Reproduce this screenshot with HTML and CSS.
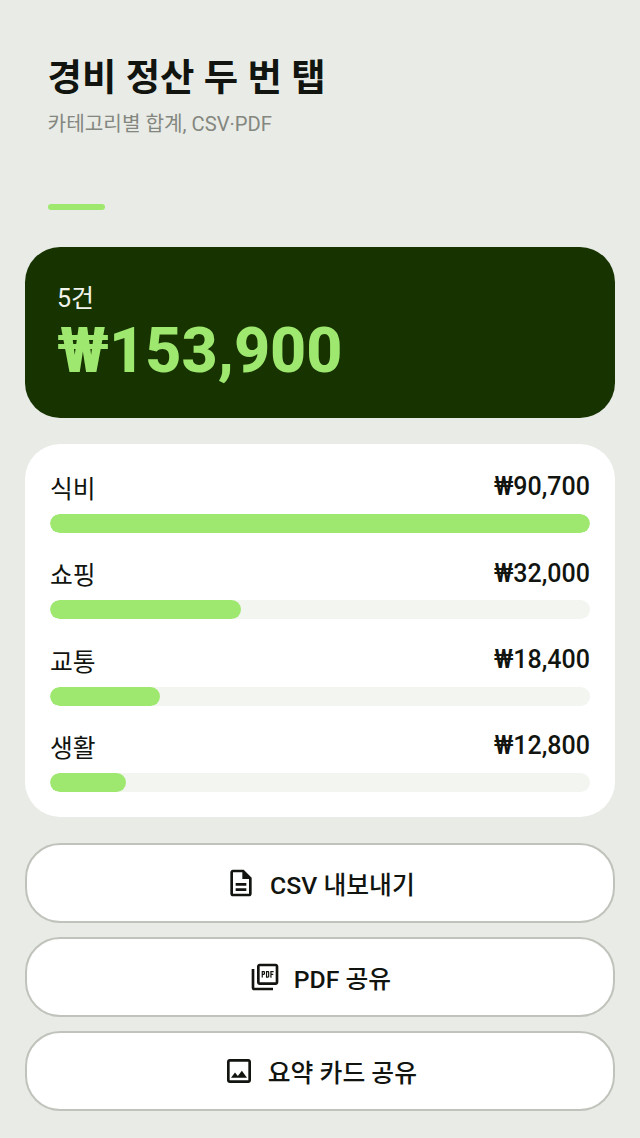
FILE: index.html
```html
<!DOCTYPE html>
<html lang="ko">
<head>
<meta charset="utf-8">
<title>경비 정산 두 번 탭</title>
<link rel="stylesheet" href="styles.css">
</head>
<body>
<main class="screen">
  <header class="head">
    <h1 class="title">경비 정산 두 번 탭</h1>
    <p class="subtitle">카테고리별 합계, CSV·PDF</p>
    <div class="accent"></div>
  </header>
  <section class="total">
    <div class="count">5건</div>
    <div class="sum">₩153,900</div>
  </section>
  <section class="stats">
    <div class="row">
      <div class="line"><span class="name">식비</span><span class="value">₩90,700</span></div>
      <div class="track"><div class="fill" style="width:100%"></div></div>
    </div>
    <div class="row">
      <div class="line"><span class="name">쇼핑</span><span class="value">₩32,000</span></div>
      <div class="track"><div class="fill" style="width:35.28%"></div></div>
    </div>
    <div class="row">
      <div class="line"><span class="name">교통</span><span class="value">₩18,400</span></div>
      <div class="track"><div class="fill" style="width:20.29%"></div></div>
    </div>
    <div class="row">
      <div class="line"><span class="name">생활</span><span class="value">₩12,800</span></div>
      <div class="track"><div class="fill" style="width:14.11%"></div></div>
    </div>
  </section>
  <section class="actions">
    <button class="btn" type="button">
      <svg class="icon" viewBox="0 0 24 24"><path d="M8 16h8v2H8zm0-4h8v2H8zm6-10H6c-1.1 0-2 .9-2 2v16c0 1.1.89 2 1.99 2H18c1.1 0 2-.9 2-2V8l-6-6zm4 18H6V4h7v5h5v11z"/></svg>
      <span>CSV 내보내기</span>
    </button>
    <button class="btn" type="button">
      <svg class="icon" viewBox="0 0 24 24"><path d="M20 2H8c-1.1 0-2 .9-2 2v12c0 1.1.9 2 2 2h12c1.1 0 2-.9 2-2V4c0-1.1-.9-2-2-2zm0 14H8V4h12v12zM4 6H2v14c0 1.1.9 2 2 2h14v-2H4V6z"/><path d="M9.5 7.500h1.600c.5 0 .9.4.9.9v1.200c0 .5-.4.9-.9.9h-.7v1.900h-.9zm.9.9v1.200h.7V8.400zM12.700 7.500h1.600c.5 0 .9.4.9.9v3.200c0 .5-.4.9-.9.9h-1.600zm.9.9v3.200h.7V8.400zM16 7.500h2.500v.9h-1.600v1.200h1.300v.9h-1.300v2H16z"/></svg>
      <span>PDF 공유</span>
    </button>
    <button class="btn" type="button">
      <svg class="icon" viewBox="0 0 24 24"><path d="M19 5v14H5V5h14m0-2H5c-1.100 0-2 .9-2 2v14c0 1.100.9 2 2 2h14c1.100 0 2-.9 2-2V5c0-1.100-.9-2-2-2zm-4.860 8.860l-3 3.870L9 13.140 6 17h12l-3.860-5.140z"/></svg>
      <span>요약 카드 공유</span>
    </button>
  </section>
</main>
</body>
</html>
```
FILE: styles.css
```css
* { box-sizing: border-box; }
html, body { margin: 0; padding: 0; }
body {
  background: #e9ebe6;
  color: #11140f;
  font-family: Roboto, "Noto Sans CJK KR", sans-serif;
}
.screen {
  width: 640px;
  height: 1138px;
  padding: 0 25px;
  display: flex;
  flex-direction: column;
  overflow: hidden;
}
.head {
  padding: 53px 22.6px 0;
  height: 247px;
}
.title {
  margin: 0;
  font-size: 37.4px;
  line-height: 51px;
  font-weight: 700;
}
.subtitle {
  margin: 4px 0 0;
  font-size: 20.2px;
  line-height: 32px;
  color: #84877f;
}
.accent {
  width: 57.6px;
  height: 6.4px;
  margin-top: 64px;
  border-radius: 3.2px;
  background: #9fe870;
}
.total {
  height: 171px;
  padding: 33px 32px 0;
  border-radius: 35.2px;
  background: #163300;
}
.count {
  font-size: 25px;
  line-height: 38px;
  color: #f1f3ec;
}
.sum {
  font-size: 62.8px;
  line-height: 65px;
  font-weight: 800;
  color: #9fe870;
}
.stats {
  margin-top: 26px;
  height: 373px;
  padding: 23.6px 25px;
  border-radius: 35.2px;
  background: #fff;
  display: flex;
  flex-direction: column;
  gap: 21px;
}
.line {
  display: flex;
  justify-content: space-between;
  align-items: center;
  height: 38.4px;
  margin-bottom: 8px;
}
.name { font-size: 24.8px; }
.value { font-size: 25px; font-weight: 500; }
.track {
  height: 19px;
  border-radius: 9.5px;
  background: #f3f5f0;
  overflow: hidden;
}
.fill {
  height: 100%;
  border-radius: 9.5px;
  background: #9fe870;
}
.actions {
  margin-top: 26px;
  display: flex;
  flex-direction: column;
  gap: 14px;
}
.btn {
  height: 80px;
  display: flex;
  align-items: center;
  justify-content: center;
  gap: 12.8px;
  border: 2px solid #c0c3bb;
  border-radius: 35.2px;
  background: #fff;
  color: #11140f;
  font-family: inherit;
  font-size: 24.8px;
  font-weight: 500;
}
.icon {
  width: 32px;
  height: 32px;
  fill: #11140f;
  flex: none;
}
```
